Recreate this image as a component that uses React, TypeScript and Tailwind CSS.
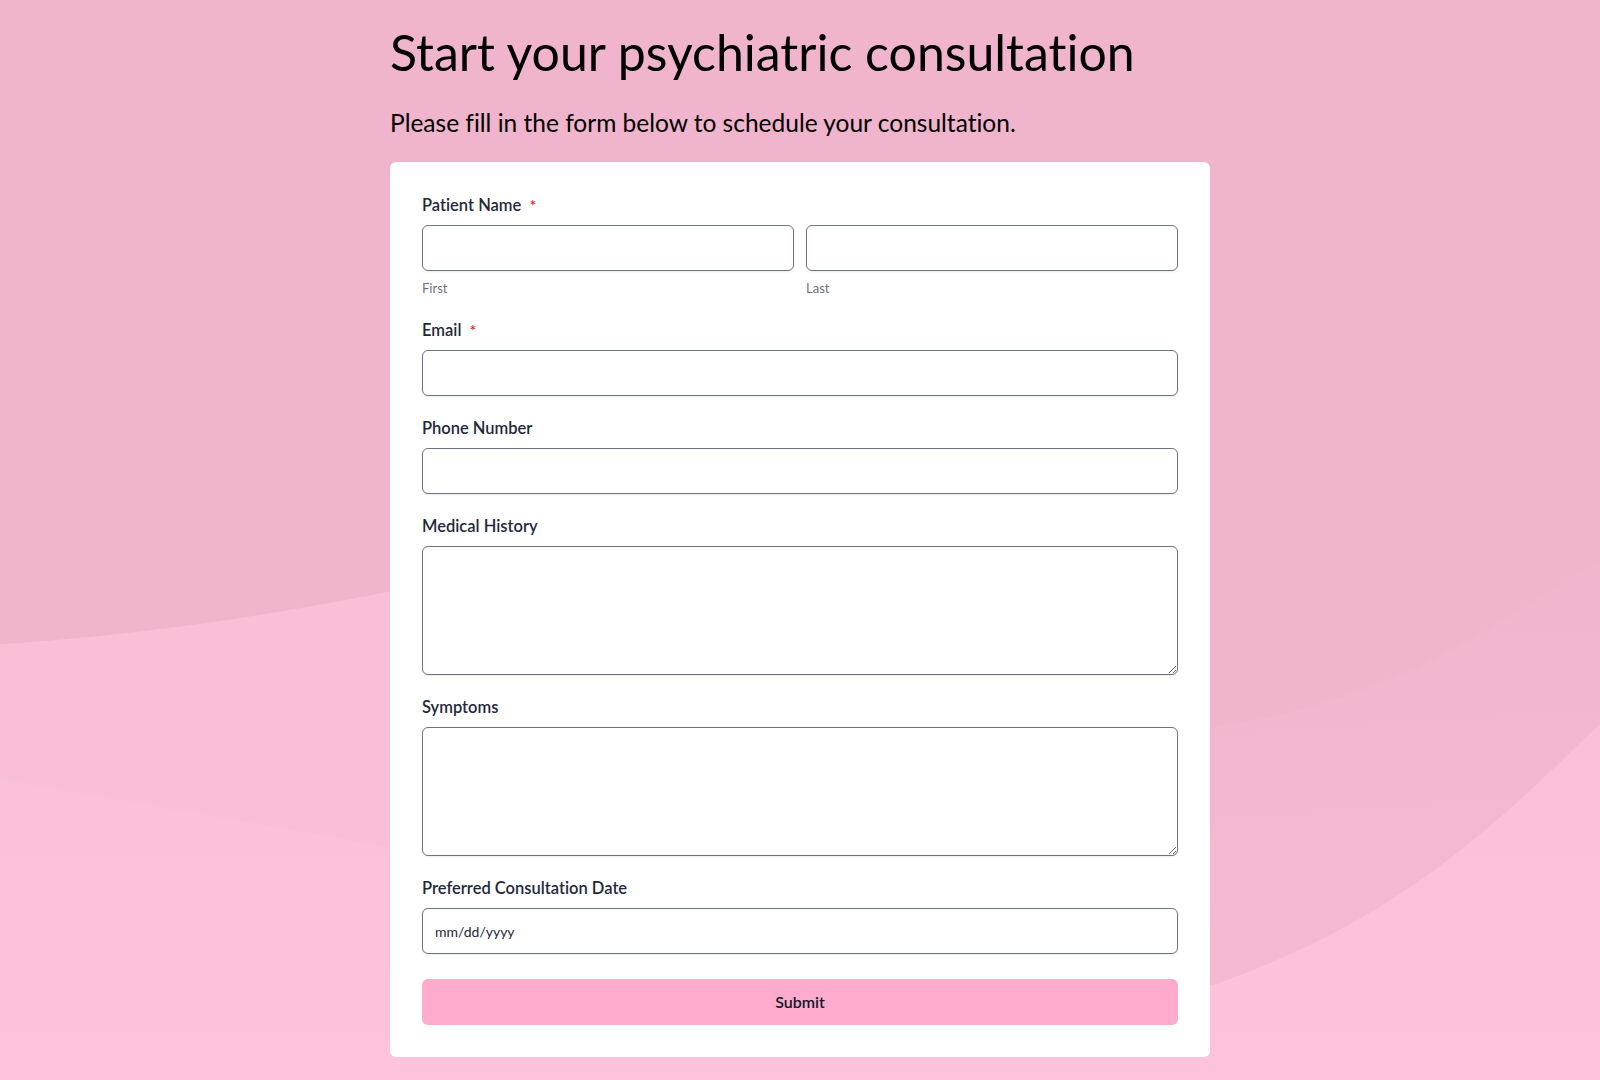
import React from "react";

const labelCls =
  "block text-[16.5px] leading-[22px] font-semibold text-[#1e293b] mb-[9px]";
const inputCls =
  "block w-full h-[46px] rounded-md border border-[#6b7280] bg-white px-3 text-sm shadow-[0_1px_2px_rgba(0,0,0,0.08)] outline-none";
const areaCls =
  "block w-full h-[129px] rounded-md border border-[#6b7280] bg-white px-3 py-2 text-sm shadow-[0_1px_2px_rgba(0,0,0,0.08)] outline-none";

function Background() {
  return (
    <svg
      className="absolute inset-0 w-full h-full"
      viewBox="0 0 1600 1080"
      preserveAspectRatio="none"
    >
      <defs>
        <linearGradient id="mid" x1="0" y1="0" x2="0.2" y2="1">
          <stop offset="0" stopColor="#f0b5cd" />
          <stop offset="1" stopColor="#f5bad3" />
        </linearGradient>
        <linearGradient id="low" x1="0" y1="0" x2="0" y2="1">
          <stop offset="0" stopColor="#fac0d9" />
          <stop offset="1" stopColor="#fec3dc" />
        </linearGradient>
      </defs>
      <rect width="1600" height="1080" fill="#f0b4cc" />
      {/* middle band */}
      <path
        d="M0 644 C 200 630, 330 602, 390 591 C 700 560, 1000 740, 1210 727 C 1400 700, 1500 620, 1600 560 L1600 1080 L0 1080 Z"
        fill="url(#mid)"
      />
      <path
        d="M0 644 C 200 630, 330 602, 390 591 L390 1080 L0 1080 Z"
        fill="#fabed8"
      />
      {/* lower lighter wave */}
      <path
        d="M0 778 C 150 805, 300 830, 390 847 C 800 960, 1000 1040, 1210 985 C 1400 920, 1500 820, 1600 723 L1600 1080 L0 1080 Z"
        fill="url(#low)"
      />
    </svg>
  );
}

function Req() {
  return <span className="ml-1 text-base leading-none text-[#dc2626]">*</span>;
}

export default function App() {
  return (
    <div
      className="relative min-h-[1080px] w-full overflow-hidden [font-variant-ligatures:none]"
      style={{ fontFamily: "Lato, 'Open Sans', sans-serif" }}
    >
      <Background />
      <div className="relative mx-auto w-[820px] pt-[21px] pb-6">
        <h1 className="text-[50px] leading-[62px] text-black font-normal">
          Start your psychiatric consultation
        </h1>
        <p className="mt-[25px] text-[24.5px] leading-[30px] text-black">
          Please fill in the form below to schedule your consultation.
        </p>

        <form
          className="mt-[24px] rounded-md bg-white px-8 pt-[32px] pb-[32px]"
          onSubmit={(e) => e.preventDefault()}
        >
          <div>
            <label className={labelCls}>
              Patient Name <Req />
            </label>
            <div className="grid grid-cols-2 gap-3">
              <div>
                <input className={inputCls} />
                <div className="mt-2 text-[13px] leading-[18px] text-[#6b7280]">
                  First
                </div>
              </div>
              <div>
                <input className={inputCls} />
                <div className="mt-2 text-[13px] leading-[18px] text-[#6b7280]">
                  Last
                </div>
              </div>
            </div>
          </div>

          <div className="mt-[22px]">
            <label className={labelCls}>
              Email <Req />
            </label>
            <input className={inputCls} />
          </div>

          <div className="mt-[21px]">
            <label className={labelCls}>Phone Number</label>
            <input className={inputCls} />
          </div>

          <div className="mt-[21px]">
            <label className={labelCls}>Medical History</label>
            <textarea className={areaCls} />
          </div>

          <div className="mt-[21px]">
            <label className={labelCls}>Symptoms</label>
            <textarea className={areaCls} />
          </div>

          <div className="mt-[21px]">
            <label className={labelCls}>Preferred Consultation Date</label>
            <input
              className={inputCls + " placeholder:text-[#1e293b]"}
              placeholder="mm/dd/yyyy"
            />
          </div>

          <button
            type="submit"
            className="mt-[25px] h-[46px] w-full rounded-md bg-[#ffabcd] text-[16px] font-semibold text-[#111827]"
          >
            Submit
          </button>
        </form>
      </div>
    </div>
  );
}
